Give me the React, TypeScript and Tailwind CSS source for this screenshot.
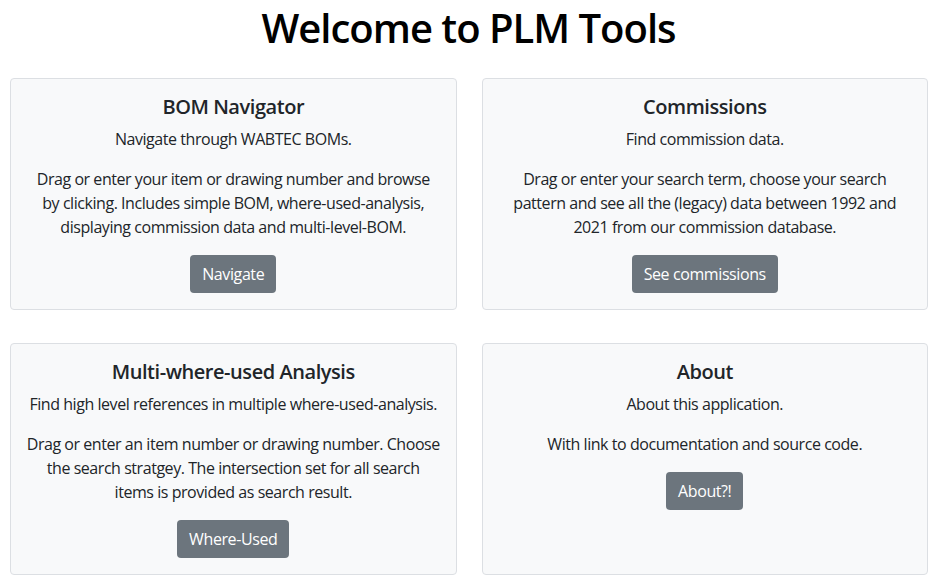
import React from "react";

type CardProps = {
  title: string;
  subtitle: string;
  lines: string[];
  button: string;
};

function Card({ title, subtitle, lines, button }: CardProps) {
  return (
    <div className="flex flex-col items-center rounded-[4px] border border-[#dcdfe3] bg-[#f8f9fa] p-4 text-center text-[#212529]">
      <h5 className="mb-2 whitespace-nowrap text-[20px] font-semibold leading-[24px] tracking-[-0.45px]">{title}</h5>
      <p className="mb-4 whitespace-nowrap text-[16px] leading-[24px] tracking-[-0.45px]">{subtitle}</p>
      <p className="mb-4 text-[16px] leading-[24px] tracking-[-0.45px]">
        {lines.map((l, i) => (
          <span key={i} className="block whitespace-nowrap">
            {l}
          </span>
        ))}
      </p>
      <button className="h-[38px] whitespace-nowrap rounded-[4px] bg-[#6c757d] px-3 text-[16px] leading-[24px] tracking-[-0.4px] text-white">
        {button}
      </button>
    </div>
  );
}

export default function App() {
  return (
    <div
      className="min-h-[582px] w-[937px] bg-white"
      style={{ fontFamily: '"Open Sans", "Noto Sans", sans-serif' }}
    >
      <h1 className="mb-[22px] text-center text-[40px] font-semibold leading-[56px] tracking-[-1px] text-black">
        Welcome to PLM Tools
      </h1>
      <div className="grid grid-cols-2 gap-x-[25px] gap-y-[33px] pl-[10px] pr-[9px]">
        <Card
          title="BOM Navigator"
          subtitle="Navigate through WABTEC BOMs."
          lines={[
            "Drag or enter your item or drawing number and browse",
            "by clicking. Includes simple BOM, where-used-analysis,",
            "displaying commission data and multi-level-BOM.",
          ]}
          button="Navigate"
        />
        <Card
          title="Commissions"
          subtitle="Find commission data."
          lines={[
            "Drag or enter your search term, choose your search",
            "pattern and see all the (legacy) data between 1992 and",
            "2021 from our commission database.",
          ]}
          button="See commissions"
        />
        <Card
          title="Multi-where-used Analysis"
          subtitle="Find high level references in multiple where-used-analysis."
          lines={[
            "Drag or enter an item number or drawing number. Choose",
            "the search stratgey. The intersection set for all search",
            "items is provided as search result.",
          ]}
          button="Where-Used"
        />
        <Card
          title="About"
          subtitle="About this application."
          lines={["With link to documentation and source code."]}
          button="About?!"
        />
      </div>
    </div>
  );
}
